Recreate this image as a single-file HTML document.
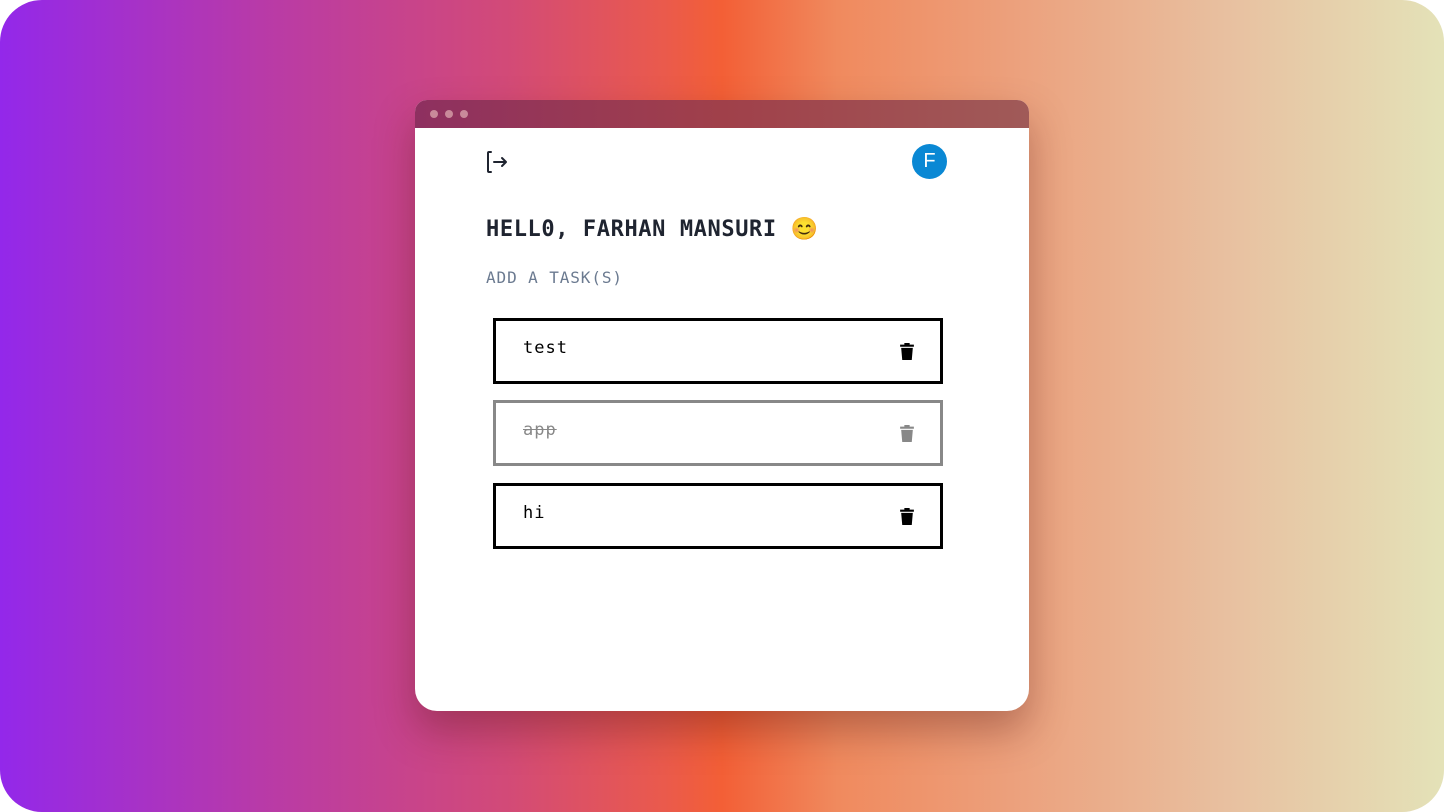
<!DOCTYPE html>
<html><head><style>
html,body{margin:0;padding:0;background:#fff;}
.bg{position:absolute;left:0;top:0;width:1444px;height:812px;border-radius:42px;overflow:hidden;
background:linear-gradient(90deg,#9328ea 0%,#b83aa8 18%,#d24a78 35%,#ea5a4c 46%,#f35f36 50%,#f08a5e 58%,#eca07c 70%,#e8c0a0 85%,#e4e2b8 100%);}
.card{position:absolute;left:415px;top:100px;width:614px;height:611px;background:#fff;border-radius:12px 12px 22px 22px;overflow:hidden;box-shadow:0 20px 40px rgba(80,20,20,.35);}
.bar{height:28px;background:linear-gradient(90deg,#8e3060,#a0404a 50%,#a05a58);position:relative;}
.dot{position:absolute;top:10px;width:8px;height:8px;border-radius:50%;background:#c98a9a;}
.mono{font-family:"DejaVu Sans Mono","Liberation Mono",monospace;}
.h{position:absolute;left:71px;top:117px;font-size:22px;font-weight:bold;color:#1f2430;letter-spacing:0.6px;}
.sub{position:absolute;left:71px;top:168px;font-size:16px;color:#6b7a90;letter-spacing:0.9px;}
.av{position:absolute;left:497px;top:44px;width:35px;height:35px;border-radius:50%;background:#0a88d4;color:#fff;font:20px "Liberation Sans",sans-serif;text-align:center;line-height:35px;}
.box{position:absolute;left:78px;width:444px;height:60px;border:3px solid #000;}
.box span{position:absolute;left:27px;top:17px;font-size:17px;letter-spacing:1px;}
.box svg{position:absolute;left:403px;top:21px;}
.done{border-color:#888;color:#888;}
.done span{text-decoration:line-through;}
</style></head><body>
<div class="bg">
<div class="card">
 <div class="bar"><div class="dot" style="left:15px"></div><div class="dot" style="left:30px"></div><div class="dot" style="left:45px"></div></div>
 <svg style="position:absolute;left:70px;top:50px" width="24" height="24" viewBox="0 0 24 24" fill="none" stroke="#1f2430" stroke-width="2" stroke-linecap="round" stroke-linejoin="round"><path d="M6 2H4a1 1 0 0 0-1 1v18a1 1 0 0 0 1 1h2"/><path d="M9 12h12M17 8l4 4-4 4"/></svg>
 <div class="av">F</div>
 <div class="h mono">HELL0, FARHAN MANSURI <span style="font-size:22px;font-family:'Noto Color Emoji',sans-serif">😊</span></div>
 <div class="sub mono">ADD A TASK(S)</div>
 <div class="box mono" style="top:218px"><span>test</span><svg width="16" height="18" viewBox="0 0 15 17"><path d="M1 2.5h13v2H1zM5 1h5v2H5zM2 5.5h11l-1 11.5H3z" fill="#000"/></svg></div>
 <div class="box mono done" style="top:300px"><span>app</span><svg width="16" height="18" viewBox="0 0 15 17"><path d="M1 2.5h13v2H1zM5 1h5v2H5zM2 5.5h11l-1 11.5H3z" fill="#888"/></svg></div>
 <div class="box mono" style="top:383px"><span>hi</span><svg width="16" height="18" viewBox="0 0 15 17"><path d="M1 2.5h13v2H1zM5 1h5v2H5zM2 5.5h11l-1 11.5H3z" fill="#000"/></svg></div>
</div>
</div>
</body></html>
